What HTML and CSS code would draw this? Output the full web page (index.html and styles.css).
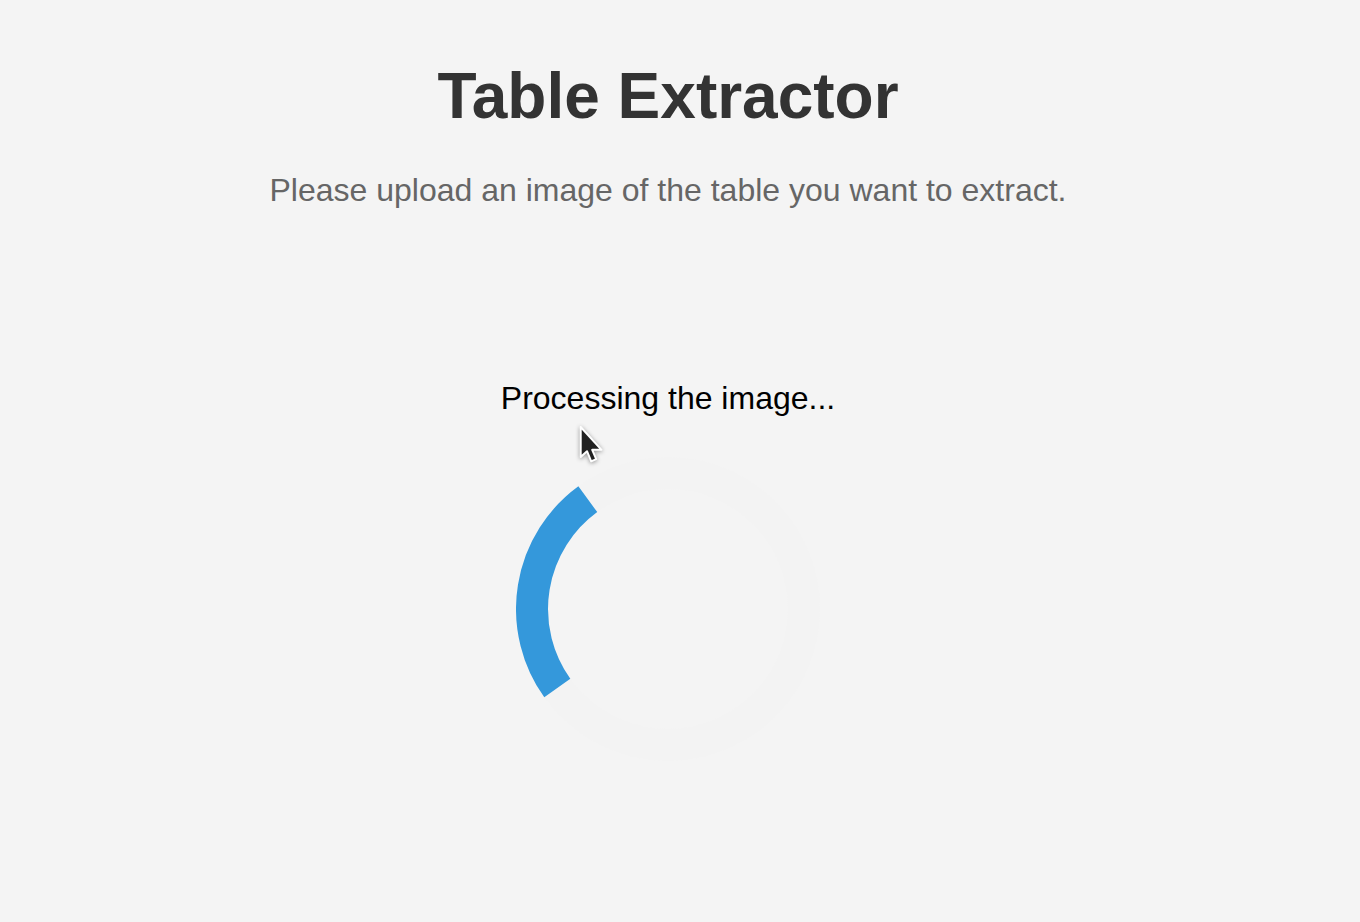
FILE: index.html
```html
<!DOCTYPE html>
<html lang="en">
<head>
<meta charset="utf-8">
<meta name="viewport" content="width=device-width, initial-scale=1">
<title>Table Extractor</title>
<link rel="stylesheet" href="styles.css">
</head>
<body>
<main class="page">
  <h1 class="title">Table Extractor</h1>
  <p class="lead">Please upload an image of the table you want to extract.</p>
  <section class="progress" role="status">
    <p class="message">Processing the image...</p>
    <svg class="pointer" viewBox="0 0 26 40" aria-hidden="true">
      <path d="M2.7 2V32L9 26.2L13.2 36.3L18.2 34.2L14.2 24.8H23.5Z" fill="#222" stroke="#fff" stroke-width="2" stroke-linejoin="round"/>
    </svg>
    <svg class="spinner" viewBox="0 0 304 304" aria-hidden="true">
      <circle class="track" cx="152" cy="152" r="136"/>
      <path class="arc" d="M71.8 42.2A136 136 0 0 0 41.3 231"/>
    </svg>
  </section>
</main>
</body>
</html>
```
FILE: styles.css
```css
body {
  margin: 0;
  background: #f4f4f4;
  color: #000;
  font-family: "Liberation Sans", Arial, sans-serif;
}

.page {
  display: flex;
  flex-direction: column;
  align-items: center;
  padding: 60px 24px 60px 0;
}

.title {
  margin: 0;
  color: #333;
  font-size: 64px;
  line-height: 72px;
}

.lead {
  margin: 40px 0 0;
  color: #666;
  font-size: 32px;
  line-height: 36px;
}

.progress {
  position: relative;
  display: flex;
  flex-direction: column;
  align-items: center;
  gap: 41px;
  margin-top: 172px;
}

.message {
  margin: 0;
  font-size: 32px;
  line-height: 36px;
}

.pointer {
  position: absolute;
  top: 45px;
  left: 77px;
  width: 26px;
  height: 40px;
  filter: drop-shadow(0 1px 2px rgba(0, 0, 0, 0.4));
}

.spinner {
  width: 304px;
  height: 304px;
}

.track,
.arc {
  fill: none;
  stroke-width: 32;
}

.track {
  stroke: #f3f3f3;
}

.arc {
  stroke: #3498db;
}
```
